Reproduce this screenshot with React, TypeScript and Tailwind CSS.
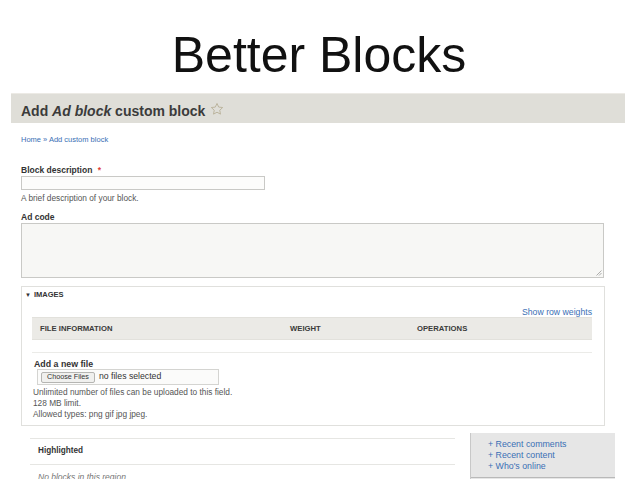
import React from "react";

const link = "text-[#3a6fb5]";

function Star() {
  return (
    <svg width="14" height="14" viewBox="0 0 24 24" className="ml-[5px] mt-[1px]">
      <path
        d="M12 2.5l2.9 6.2 6.8.8-5 4.6 1.3 6.7L12 17.5l-6 3.3 1.3-6.7-5-4.6 6.8-.8z"
        fill="none"
        stroke="#b9b29a"
        strokeWidth="1.6"
        strokeLinejoin="round"
      />
    </svg>
  );
}

export default function App() {
  return (
    <div className="h-[479px] w-[638px] overflow-hidden bg-white font-['Liberation_Sans',Arial,sans-serif] text-[#333]">
      {/* slide title */}
      <div className="flex h-[93px] justify-center pt-[25px]">
        <h1 className="text-[50px] leading-[60px] text-[#111]">Better Blocks</h1>
      </div>

      {/* page header */}
      <div className="ml-[11px] flex h-[30px] w-[614px] items-start border-t border-[#eceae5] bg-[#dfded8] pl-[10px] pt-[7px]">
        <span className="text-[14px] font-bold leading-[20px] text-[#3b3b3b]">
          Add <em>Ad block</em> custom block
        </span>
        <Star />
      </div>

      <div className="pl-[21px]">
        <div className={`mt-[12px] text-[7.5px] leading-[10px] ${link}`}>
          Home » Add custom block
        </div>

        <div className="mt-[20px] text-[8.5px] font-bold leading-[10px] text-[#333]">
          Block description <span className="ml-[3px] text-[#e0413a]">*</span>
        </div>
        <div className="mt-[1px] h-[14px] w-[244px] border border-[#c9c9c6] bg-[#fcfcfb]" />
        <div className="mt-[3px] text-[8.3px] leading-[10px] text-[#555]">
          A brief description of your block.
        </div>

        <div className="mt-[9px] text-[8.5px] font-bold leading-[10px] text-[#333]">Ad code</div>
        <div className="relative mt-[1px] h-[55px] w-[583px] border border-[#c9c9c6] bg-[#f7f7f5]">
          <svg width="6" height="6" viewBox="0 0 6 6" className="absolute bottom-[1px] right-[1px]">
            <path d="M5.5 0.5L0.5 5.5M5.5 3L3 5.5" stroke="#999" strokeWidth="0.8" />
          </svg>
        </div>

        {/* images fieldset */}
        <div className="mt-[8px] box-border flex h-[140px] w-[584px] flex-col border border-[#e0e0dd] pl-[10px] pr-[12px]">
          <div className="-ml-[7px] mt-[3px] flex items-center text-[7.5px] font-bold leading-[10px] text-[#333]">
            <span className="mr-[3px] text-[6px]">▼</span>IMAGES
          </div>
          <div className={`mt-[7px] text-right text-[8.7px] leading-[10px] ${link}`}>Show row weights</div>
          <div className="flex h-[23px] items-center border-y border-[#e2e1dc] bg-[#ebeae6] text-[7.7px] font-bold text-[#3a3a3a]">
            <span className="w-[258px] pl-[8px]">FILE INFORMATION</span>
            <span className="w-[127px]">WEIGHT</span>
            <span>OPERATIONS</span>
          </div>
          <div className="h-[13px] border-b border-[#ebebe8]" />

          <div className="ml-[2px] mt-[6px] text-[8.8px] font-bold leading-[10px] text-[#333]">
            Add a new file
          </div>
          <div className="ml-[5px] flex h-[16px] w-[182px] items-center border border-[#d4d4d1] bg-[#fbfbfa] pl-[3px]">
            <span className="flex h-[11px] items-center rounded-[2px] border border-[#b5b5b2] bg-[#f0f0ee] px-[5px] text-[7.2px] leading-none text-[#333]">
              Choose Files
            </span>
            <span className="ml-[4px] text-[8.7px] text-[#333]">no files selected</span>
          </div>
          <div className="ml-[1px] mt-[2px] text-[8.3px] leading-[11px] text-[#555]">
            <div>Unlimited number of files can be uploaded to this field.</div>
            <div>128 MB limit.</div>
            <div>Allowed types: png gif jpg jpeg.</div>
          </div>
        </div>

        {/* block regions */}
        <div className="flex">
          <div className="ml-[9px] mt-[12px] w-[425px]">
            <div className="flex h-[27px] items-center border-y border-[#e6e6e3] pl-[8px] text-[8.2px] font-bold text-[#333]">
              Highlighted
            </div>
            <div className="pl-[8px] pt-[7px] text-[8.5px] italic leading-[10px] text-[#777]">
              No blocks in this region
            </div>
          </div>
          <div className="ml-[15px] mt-[7px] h-[60px] w-[145px] border-l border-[#c8c8c8] bg-[#e6e6e6]">
            <div className={`pl-[17px] pt-[6px] text-[8.8px] leading-[11px] ${link}`}>
              <div>+ Recent comments</div>
              <div>+ Recent content</div>
              <div>+ Who's online</div>
            </div>
            <div className="mt-[5px] border-t border-[#b9b9b9]" />
          </div>
        </div>
      </div>
    </div>
  );
}
